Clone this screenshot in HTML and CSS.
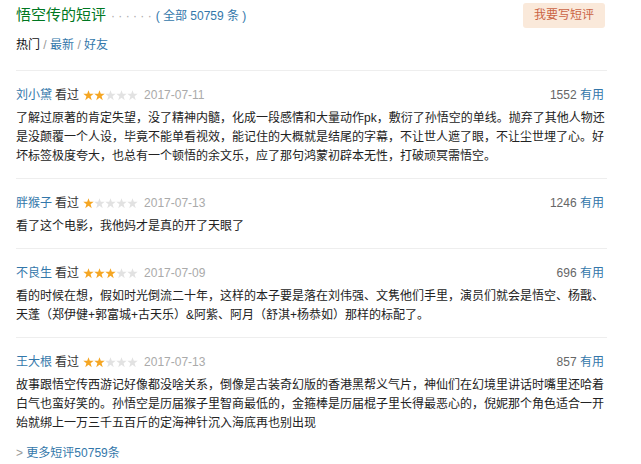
FILE: index.html
```html
<!DOCTYPE html>
<html lang="zh-CN">
<head>
<meta charset="utf-8">
<title>悟空传的短评</title>
<link rel="stylesheet" href="styles.css">
</head>
<body>
<svg class="sprite" aria-hidden="true">
  <symbol id="star" viewBox="0 0 11 11">
    <polygon points="5.5,0.2 6.79,3.72 10.73,3.8 7.59,6.18 8.73,10.2 5.5,7.8 2.27,10.2 3.41,6.18 0.27,3.8 4.21,3.72"/>
  </symbol>
</svg>
<div class="wrap">
  <div class="top">
    <h2 class="title">悟空传的短评<span class="dots">· · · · · ·</span><a class="all">( 全部 50759 条 )</a></h2>
    <a class="write">我要写短评</a>
  </div>
  <div class="tabs"><span class="cur">热门</span> <span class="sep">/</span> <a>最新</a> <span class="sep">/</span> <a>好友</a></div>

  <div class="comment">
    <div class="info">
      <div class="who"><a>刘小黛</a> <span>看过</span> <span class="rating"><svg class="on"><use href="#star"/></svg><svg class="on"><use href="#star"/></svg><svg><use href="#star"/></svg><svg><use href="#star"/></svg><svg><use href="#star"/></svg></span> <span class="date">2017-07-11</span></div>
      <div class="vote"><span class="num">1552</span> <a>有用</a></div>
    </div>
    <p class="short">了解过原著的肯定失望，没了精神内髓，化成一段感情和大量动作pk，敷衍了孙悟空的单线。抛弃了其他人物还是没颠覆一个人设，毕竟不能单看视效，能记住的大概就是结尾的字幕，不让世人遮了眼，不让尘世埋了心。好坏标签极度夸大，也总有一个顿悟的余文乐，应了那句鸿蒙初辟本无性，打破顽冥需悟空。</p>
  </div>

  <div class="comment">
    <div class="info">
      <div class="who"><a>胖猴子</a> <span>看过</span> <span class="rating"><svg class="on"><use href="#star"/></svg><svg><use href="#star"/></svg><svg><use href="#star"/></svg><svg><use href="#star"/></svg><svg><use href="#star"/></svg></span> <span class="date">2017-07-13</span></div>
      <div class="vote"><span class="num">1246</span> <a>有用</a></div>
    </div>
    <p class="short">看了这个电影，我他妈才是真的开了天眼了</p>
  </div>

  <div class="comment">
    <div class="info">
      <div class="who"><a>不良生</a> <span>看过</span> <span class="rating"><svg class="on"><use href="#star"/></svg><svg class="on"><use href="#star"/></svg><svg class="on"><use href="#star"/></svg><svg><use href="#star"/></svg><svg><use href="#star"/></svg></span> <span class="date">2017-07-09</span></div>
      <div class="vote"><span class="num">696</span> <a>有用</a></div>
    </div>
    <p class="short">看的时候在想，假如时光倒流二十年，这样的本子要是落在刘伟强、文隽他们手里，演员们就会是悟空、杨戬、天蓬（郑伊健+郭富城+古天乐）&amp;阿紫、阿月（舒淇+杨恭如）那样的标配了。</p>
  </div>

  <div class="comment">
    <div class="info">
      <div class="who"><a>王大根</a> <span>看过</span> <span class="rating"><svg class="on"><use href="#star"/></svg><svg class="on"><use href="#star"/></svg><svg><use href="#star"/></svg><svg><use href="#star"/></svg><svg><use href="#star"/></svg></span> <span class="date">2017-07-13</span></div>
      <div class="vote"><span class="num">857</span> <a>有用</a></div>
    </div>
    <p class="short">故事跟悟空传西游记好像都没啥关系，倒像是古装奇幻版的香港黑帮义气片，神仙们在幻境里讲话时嘴里还哈着白气也蛮好笑的。孙悟空是历届猴子里智商最低的，金箍棒是历届棍子里长得最恶心的，倪妮那个角色适合一开始就绑上一万三千五百斤的定海神针沉入海底再也别出现</p>
  </div>

  <div class="more"><span class="gt">&gt;</span> <a>更多短评50759条</a></div>
</div>
</body>
</html>
```

FILE: styles.css
```css
html, body {
  margin: 0;
  padding: 0;
  background: #fff;
}
body {
  font-family: "Liberation Sans", "Noto Sans CJK SC", sans-serif;
  font-size: 12px;
  color: #222;
}
.sprite {
  display: none;
}
a {
  color: #3377aa;
  text-decoration: none;
}
.wrap {
  width: 591px;
  padding: 3px 0 0 16px;
}
.top {
  display: flex;
  justify-content: space-between;
  align-items: center;
  height: 25px;
}
.title {
  margin: 0;
  font-size: 15px;
  font-weight: normal;
  line-height: 25px;
  color: #007722;
}
.dots {
  font-size: 12px;
  color: #aaa;
  margin-left: 5px;
}
.all {
  font-size: 12px;
  margin-left: 4px;
}
.write {
  display: block;
  height: 25px;
  line-height: 25px;
  padding: 0 11px;
  margin-right: 2px;
  background: #fae9da;
  color: #ca6445;
  border-radius: 3px;
}
.tabs {
  margin-top: 7px;
  line-height: 20px;
  margin-bottom: 15px;
}
.tabs .cur {
  color: #111;
}
.tabs .sep {
  color: #999;
}
.comment {
  border-top: 1px solid #eeeeee;
  padding: 13px 0 12px;
}
.info {
  display: flex;
  justify-content: space-between;
  align-items: center;
  line-height: 22px;
}
.who {
  display: flex;
  align-items: center;
  gap: 3px;
  color: #333;
}
.rating {
  display: inline-flex;
  margin-left: 1px;
}
.rating svg {
  width: 11px;
  height: 11px;
  fill: #e2e2e2;
}
.rating svg.on {
  fill: #f5a623;
}
.date {
  color: #aaa;
  margin-left: 3px;
}
.vote {
  margin-right: 3px;
}
.num {
  color: #666;
}
.short {
  margin: 3px 0 0;
  line-height: 19px;
  color: #222;
}
.more {
  margin-top: 1px;
  line-height: 14px;
}
.more .gt {
  color: #999;
}
```
